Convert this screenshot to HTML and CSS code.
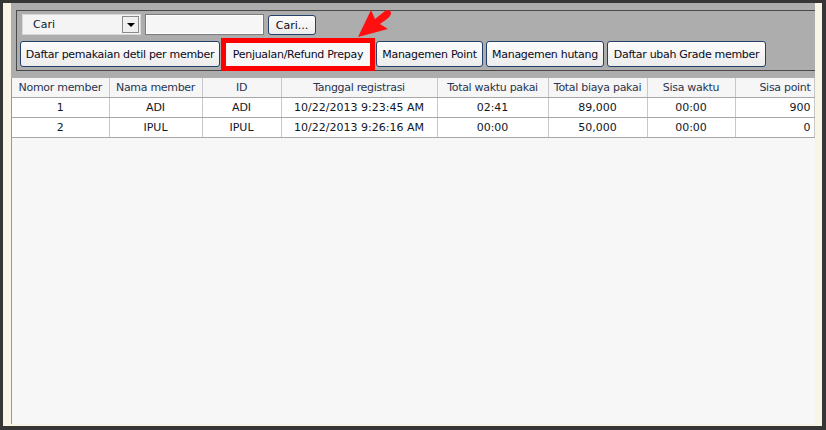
FILE: index.html
```html
<!DOCTYPE html>
<html>
<head>
<meta charset="utf-8">
<link rel="stylesheet" href="styles.css">
</head>
<body>
<div class="window">
  <div class="frame">
    <div class="toolbar">
      <div class="group">
        <div class="row row1">
          <div class="select"><span class="select-text">Cari</span><span class="select-btn"><span class="tri"></span></span></div>
          <div class="input"></div>
          <div class="btn btn-small">Cari...</div>
        </div>
        <div class="row row2">
          <div class="btn w1">Daftar pemakaian detil per member</div>
          <div class="highlight"><div class="btn-plain">Penjualan/Refund Prepay</div></div>
          <div class="btn w3">Managemen Point</div>
          <div class="btn w4">Managemen hutang</div>
          <div class="btn w5">Daftar ubah Grade member</div>
        </div>
      </div>
      <svg class="arrow" width="40" height="36" viewBox="0 0 40 36">
        <path d="M2 31 L15 4 L19 13 L29 5 Q34 2 35 7 Q35 10 31 13 L24 18 L32 23 Z" fill="#ff1010"/>
      </svg>
    </div>
    <div class="grid-area">
      <table class="grid">
        <thead>
          <tr>
            <th class="c1">Nomor member</th>
            <th class="c2">Nama member</th>
            <th class="c3">ID</th>
            <th class="c4">Tanggal registrasi</th>
            <th class="c5">Total waktu pakai</th>
            <th class="c6">Total biaya pakai</th>
            <th class="c7">Sisa waktu</th>
            <th class="c8 right">Sisa point</th>
          </tr>
        </thead>
        <tbody>
          <tr>
            <td>1</td><td>ADI</td><td>ADI</td><td>10/22/2013 9:23:45 AM</td><td>02:41</td><td>89,000</td><td>00:00</td><td class="right">900</td>
          </tr>
          <tr>
            <td>2</td><td>IPUL</td><td>IPUL</td><td>10/22/2013 9:26:16 AM</td><td>00:00</td><td>50,000</td><td>00:00</td><td class="right">0</td>
          </tr>
        </tbody>
      </table>
    </div>
  </div>
</div>
</body>
</html>
```
FILE: styles.css
```css
* { box-sizing: border-box; }
html, body { margin: 0; padding: 0; }
body {
  width: 826px;
  height: 430px;
  overflow: hidden;
  font-family: "DejaVu Sans", Verdana, sans-serif;
  font-size: 11px;
  color: #101828;
}
.window {
  width: 826px;
  height: 430px;
  background: #363636;
  padding: 3px 4px 4px 3px;
}
.frame {
  height: 100%;
  background: #f8f5e6;
  padding: 0 7px 2px 8px;
  display: flex;
  flex-direction: column;
}
.toolbar {
  position: relative;
  height: 75px;
  background: #adadad;
  padding: 7px 0 7px 5px;
  flex: none;
}
.group {
  height: 61px;
  border-top: 1px solid #4a4a4a;
  border-left: 1px solid #4a4a4a;
  border-bottom: 1px solid #4a4a4a;
  padding: 3px 0 0 5px;
}
.row { display: flex; align-items: center; }
.row1 { height: 21px; gap: 4px; }
.row2 { height: 26px; margin-top: 6px; margin-left: -2px; letter-spacing: -0.3px; }
.select {
  width: 119px;
  height: 21px;
  background: #f4f4f4;
  border: 1px solid #d8d8d8;
  display: flex;
  align-items: center;
  justify-content: space-between;
  padding: 0 1px 0 10px;
}
.select-text { line-height: 1; }
.select-btn {
  width: 17px;
  height: 17px;
  background: #f0f0f0;
  border: 1px solid #8a8a8a;
  display: flex;
  align-items: center;
  justify-content: center;
}
.tri {
  width: 0; height: 0;
  border-left: 4px solid transparent;
  border-right: 4px solid transparent;
  border-top: 4px solid #000;
}
.input {
  width: 119px;
  height: 21px;
  background: #f6f6f6;
  border: 1px solid #7c7c7c;
  box-shadow: inset 0 0 0 1px #fff;
}
.btn {
  height: 26px;
  border: 1px solid #23426b;
  border-radius: 3px;
  background: linear-gradient(#fdfdfd, #ececec);
  display: flex;
  align-items: center;
  justify-content: center;
  white-space: nowrap;
  color: #0a0a1a;
}
.btn-small { width: 48px; height: 20px; margin-top: 1px; }
.w1 { width: 200px; }
.w3 { width: 107px; margin-left: 1px; }
.w4 { width: 118px; margin-left: 3px; }
.w5 { width: 159px; margin-left: 3px; }
.highlight {
  width: 154px;
  height: 33px;
  margin: -3px 0 -4px 1px;
  border: 5px solid #ff0000;
  background: #f7f7f7;
  display: flex;
  align-items: center;
  justify-content: center;
}
.btn-plain { white-space: nowrap; color: #0a0a1a; }
.arrow {
  position: absolute;
  left: 345px;
  top: 3px;
}
.grid-area {
  flex: 1;
  background: #f7f7f7;
  border-left: 1px solid #9a9a9a;
}
.grid {
  border-collapse: collapse;
  table-layout: fixed;
  width: 802px;
}
.grid th {
  height: 19px;
  font-weight: normal;
  background: #f6f6f6;
  color: #2a3550;
  border-right: 1px solid #c8c8c8;
  border-bottom: 1px solid #a8a8a8;
  padding: 0 3px;
  text-align: center;
  white-space: nowrap;
  letter-spacing: -0.3px;
}
.grid td {
  height: 20px;
  background: #fff;
  border-right: 1px solid #c8c8c8;
  border-bottom: 1px solid #a8a8a8;
  padding: 0 3px;
  text-align: center;
  white-space: nowrap;
}
.grid .right { text-align: right; }
.c1 { width: 97px; }
.c2 { width: 93px; }
.c3 { width: 79px; }
.c4 { width: 156px; }
.c5 { width: 111px; }
.c6 { width: 99px; }
.c7 { width: 88px; }
.c8 { width: 79px; }
```
